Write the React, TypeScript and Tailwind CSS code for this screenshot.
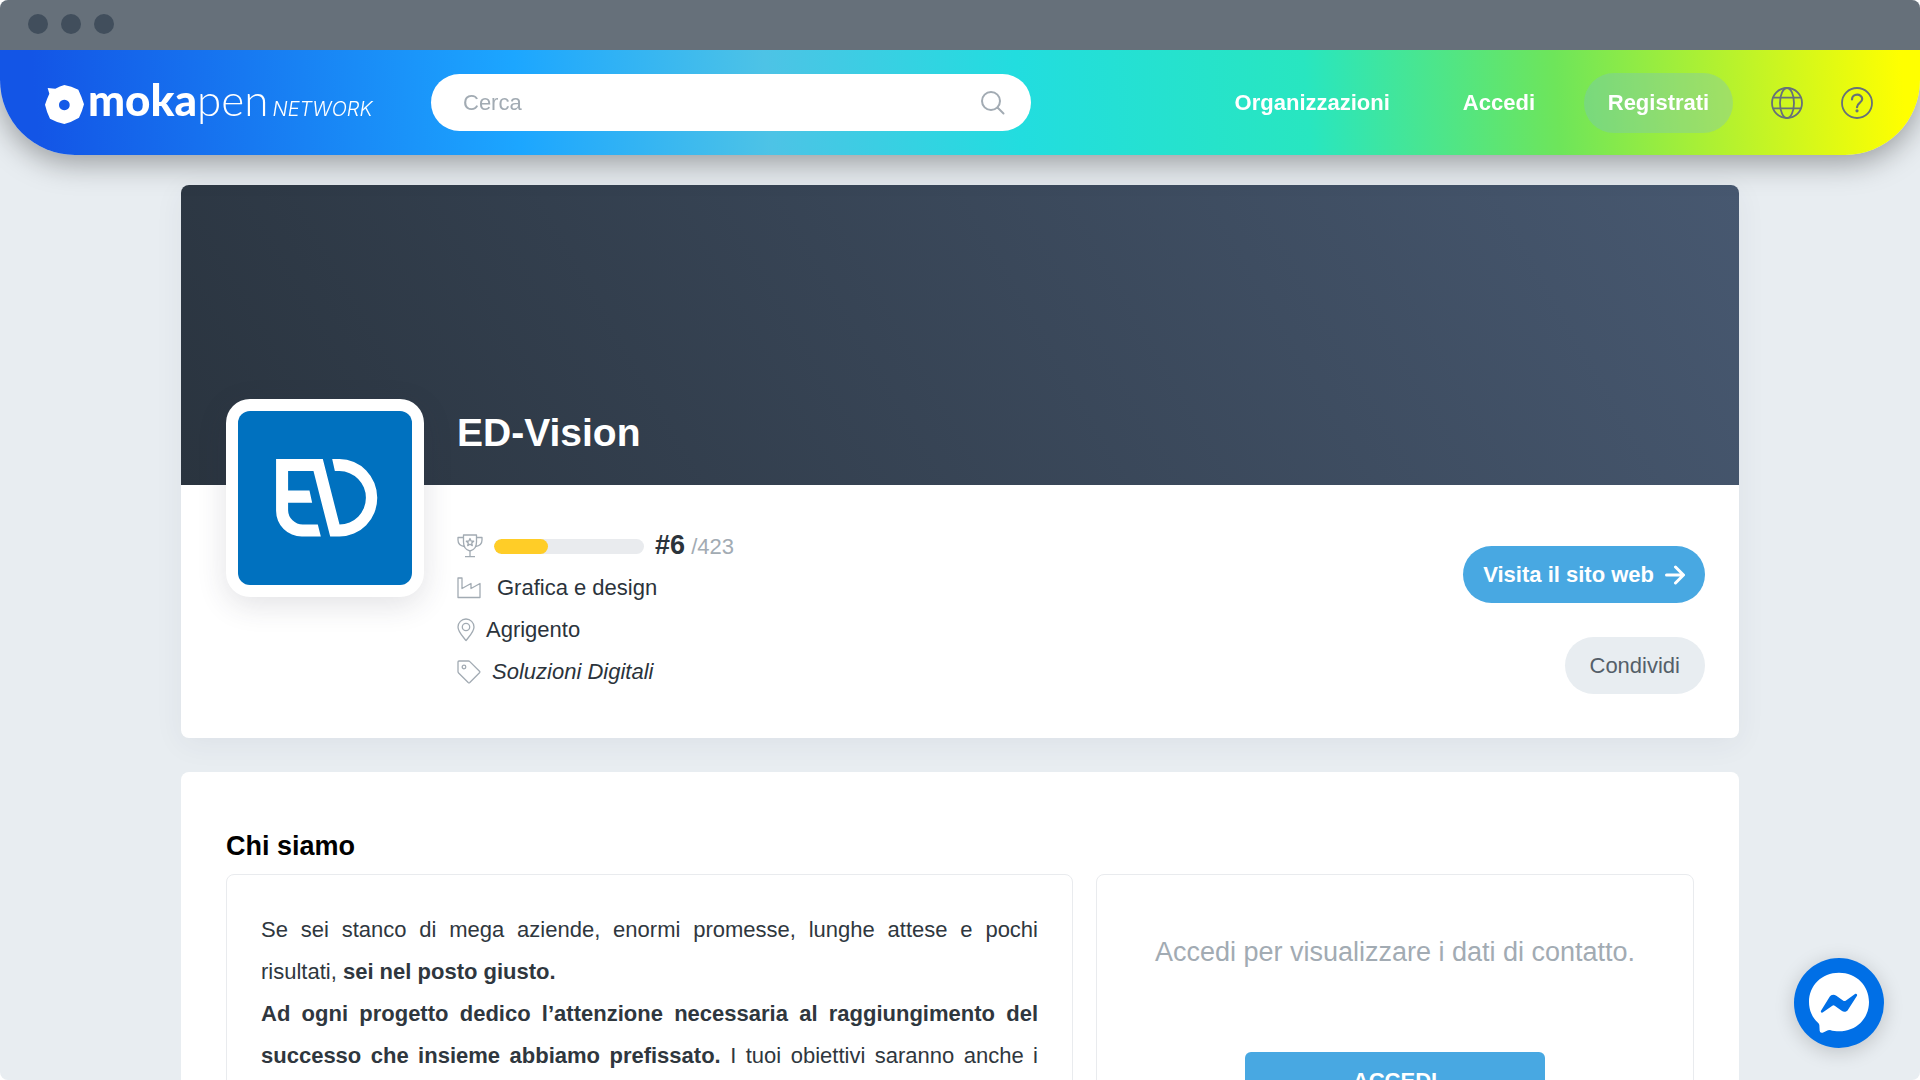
import type { ReactNode } from 'react';

interface IconProps {
  className?: string;
}

const ranking = { position: 6, total: 423, percent: 36 };

const LogoMark = () => (
  <svg viewBox="135 255 117 117" className="w-[39px] h-[39px] shrink-0" fill="#fff" aria-hidden="true">
    <path
      fillRule="evenodd"
      d="M143 264L166 266Q180 258 193 255Q214 259 235 269Q245 290 252 313Q247 333 237 353Q215 366 193 372Q170 367 150 356Q140 336 135 314Q140 298 148 281ZM193 299a16 16 0 1 0 0.1 0Z"
    />
  </svg>
);

const SearchIcon = ({ className }: IconProps) => (
  <svg viewBox="0 0 24 24" className={className} fill="none" stroke="currentColor" strokeWidth="2" strokeLinecap="round">
    <circle cx="10" cy="10" r="9" />
    <path d="M16.500 16.500L22.500 22.500" />
  </svg>
);

const GlobeIcon = ({ className }: IconProps) => (
  <svg viewBox="0 0 32 32" className={className} fill="none" stroke="currentColor" strokeWidth="1.800">
    <circle cx="16" cy="16" r="15" />
    <ellipse cx="16" cy="16" rx="7" ry="15" />
    <path d="M2.200 10.700H29.800M2.200 21.300H29.800" />
  </svg>
);

const HelpIcon = ({ className }: IconProps) => (
  <svg viewBox="0 0 32 32" className={className} fill="none" stroke="currentColor" strokeWidth="1.800">
    <circle cx="16" cy="16" r="15" />
    <path d="M11 12.500C11 6 21.200 6.300 21.200 12C21.200 16 16 15.800 16 20.200" strokeWidth="2.200" strokeLinecap="round" />
    <circle cx="16" cy="23.800" r="1.600" fill="currentColor" stroke="none" />
  </svg>
);

const TrophyIcon = () => (
  <svg viewBox="0 0 26 24" className="w-[26px] h-6" fill="none" stroke="currentColor" strokeWidth="1.300" strokeLinejoin="round">
    <path d="M6.500 1H19.500V8C19.500 13 17 16 13 17C9 16 6.500 13 6.500 8ZM13 17V22.500M8 22.700H18" />
    <path d="M6.500 3.500H1V6C1 9.500 3.500 12 7.500 12.500M19.500 3.500H25V6C25 9.500 22.500 12 18.500 12.500" />
    <path d="M13 4.500L14.100 7L16.700 7.200L14.700 9L15.300 11.600L13 10.200L10.700 11.600L11.300 9L9.300 7.200L11.900 7Z" />
  </svg>
);

const IndustryIcon = () => (
  <svg viewBox="0 0 24 22" className="w-6 h-[22px]" fill="none" stroke="currentColor" strokeWidth="1.300" strokeLinejoin="round">
    <path d="M1 1H5V11.500L14 6.500V11.500L23 6.500V20.500H1Z" />
  </svg>
);

const PinIcon = () => (
  <svg viewBox="0 0 18 24" className="w-[18px] h-6" fill="none" stroke="currentColor" strokeWidth="1.300" strokeLinejoin="round">
    <path d="M9 22.500C6 18.500 1 14 1 9A8 8 0 0 1 17 9C17 14 12 18.500 9 22.500Z" />
    <circle cx="9" cy="9" r="3.700" />
  </svg>
);

const TagIcon = () => (
  <svg viewBox="0 0 24 24" className="w-6 h-6" fill="none" stroke="currentColor" strokeWidth="1.300" strokeLinejoin="round">
    <path d="M1 2Q1 1 2 1H11.500Q12.200 1 12.800 1.600L22.500 11.200Q23.200 12 22.500 12.800L12.800 22.500Q12 23.200 11.200 22.500L1.600 13Q1 12.400 1 11.500Z" />
    <circle cx="7" cy="7" r="1.800" />
  </svg>
);

const ArrowIcon = () => (
  <svg viewBox="0 0 20 20" className="w-5 h-5" fill="none" stroke="currentColor" strokeWidth="3" strokeLinecap="round" strokeLinejoin="round">
    <path d="M1.500 10H18M10.500 2L18.500 10L10.500 18" />
  </svg>
);

const InfoRow = ({ icon, children }: { icon: ReactNode; children: ReactNode }) => (
  <li className="flex items-center h-[42px] text-[#a2abb3]">
    {icon}
    {children}
  </li>
);

const Header = () => (
  <header className="sticky top-0 z-20 flex items-center h-[105px] pl-[45px] pr-[47px] rounded-b-[75px] shadow-[0_8px_30px_rgba(0,0,0,0.35)] bg-[linear-gradient(86deg,#1355e6_2%,#1ca6ff_27%,#4dc3e6_40%,#22dddf_53%,#28e6c0_68%,#6ee55a_81%,#ffff00_99%)]">
    <a href="#" className="flex items-center w-[386px] pt-[3px] text-white shrink-0" aria-label="mokapen network">
      <LogoMark />
      <span className="flex items-baseline ml-1 font-['Lato',sans-serif] text-[44px] leading-[52px] whitespace-nowrap">
        <span className="font-black">moka</span>
        <span className="font-light">pen</span>
        <span className="ml-1 font-['Inter',sans-serif] text-[20px] italic font-light">NETWORK</span>
      </span>
    </a>
    <form className="flex items-center w-[600px] h-[57px] pl-8 pr-[26px] rounded-full bg-white text-[#a2abb3]">
      <label htmlFor="search" className="sr-only">Cerca</label>
      <input
        id="search"
        type="text"
        placeholder="Cerca"
        className="flex-1 min-w-0 h-[42px] outline-none placeholder:text-[#a2abb3]"
      />
      <button type="submit" aria-label="Cerca">
        <SearchIcon className="w-6 h-6" />
      </button>
    </form>
    <nav className="flex items-center ml-auto font-bold text-white">
      <a href="#">Organizzazioni</a>
      <a href="#" className="ml-[73px]">Accedi</a>
      <a href="#" className="flex items-center justify-center w-[149px] h-[60px] ml-[49px] rounded-full bg-[#78c0cc]/35">
        Registrati
      </a>
      <button type="button" className="ml-[38px] text-[#66707a]" aria-label="Lingua">
        <GlobeIcon className="w-8 h-8" />
      </button>
      <button type="button" className="ml-[38px] text-[#66707a]" aria-label="Aiuto">
        <HelpIcon className="w-8 h-8" />
      </button>
    </nav>
  </header>
);

const ProfileCard = () => (
  <section className="rounded-lg bg-white shadow-[0_6px_30px_rgba(50,50,90,0.06)]">
    <div className="flex items-end h-[300px] pl-[276px] pb-[29px] rounded-t-lg bg-[linear-gradient(60deg,#2a343f,#475870)]">
      <h1 className="text-[39px] leading-[46px] font-bold text-white">ED-Vision</h1>
    </div>
    <div className="flex items-start pl-[45px] pr-[34px] pb-11">
      <div className="w-[198px] h-[198px] -mt-[86px] p-3 rounded-3xl bg-white shadow-[0_8px_30px_rgba(50,50,70,0.14)]">
        <svg viewBox="204 93 521 521" className="w-full h-full rounded-xl bg-[#0071bf]" fill="#fff" role="img" aria-label="ED-Vision">
          <path d="M486 237H508A113 116 0 0 1 508 469H480L430 273H354V331H418L426 368H354V390A44 44 0 0 0 398 433H443L452 469H395A77 77 0 0 1 318 392V237H458L508 433A79 80 0 0 0 508 273H494Z" />
        </svg>
      </div>
      <ul className="flex-1 ml-[33px] pt-10">
        <InfoRow icon={<TrophyIcon />}>
          <div className="w-[150px] h-[15px] ml-[11px] rounded-full bg-[#e9ebee] overflow-hidden">
            <div className="h-full rounded-full bg-[#ffcd27]" style={{ width: `${ranking.percent}%` }} />
          </div>
          <p className="ml-[11px]">
            <strong className="text-[27px] text-[#2b333b]">#{ranking.position}</strong> /{ranking.total}
          </p>
        </InfoRow>
        <InfoRow icon={<IndustryIcon />}>
          <span className="ml-4 text-[#2b333b]">Grafica e design</span>
        </InfoRow>
        <InfoRow icon={<PinIcon />}>
          <span className="ml-[11px] text-[#2b333b]">Agrigento</span>
        </InfoRow>
        <InfoRow icon={<TagIcon />}>
          <em className="ml-[11px] text-[#2b333b]">Soluzioni Digitali</em>
        </InfoRow>
      </ul>
      <div className="flex flex-col items-end gap-[34px] pt-[61px]">
        <a href="#" className="flex items-center gap-[11px] h-[57px] px-5 rounded-full bg-[#48a8e2] font-bold text-white">
          Visita il sito web
          <ArrowIcon />
        </a>
        <button type="button" className="h-[57px] px-[25px] rounded-full bg-[#e8edf1] text-[#555f69]">
          Condividi
        </button>
      </div>
    </div>
  </section>
);

const AboutCard = () => (
  <section className="px-[45px] pt-[53px] pb-12 rounded-lg bg-white">
    <h2 className="mb-[7px] text-[27px] leading-[42px] font-bold text-black">Chi siamo</h2>
    <div className="grid grid-cols-[847fr_598fr] gap-[23px]">
      <div className="px-[34px] py-[34px] rounded-lg border border-[#e9ebee] text-justify leading-[42px] text-[#2f373e]">
        <p>
          Se sei stanco di mega aziende, enormi promesse, lunghe attese e pochi risultati,{' '}
          <strong>sei nel posto giusto.</strong>
        </p>
        <p className="[text-align-last:justify]">
          <strong>Ad ogni progetto dedico l’attenzione necessaria al raggiungimento del successo che insieme abbiamo prefissato.</strong>{' '}
          I tuoi obiettivi saranno anche i
        </p>
      </div>
      <div className="flex flex-col items-center px-8 pt-14 pb-12 rounded-lg border border-[#e9ebee]">
        <p className="text-[27px] leading-[42px] text-[#a2abb3]">Accedi per visualizzare i dati di contatto.</p>
        <button type="button" className="w-[300px] h-[57px] mt-[79px] rounded-md bg-[#48a8e2] font-bold text-white">
          ACCEDI
        </button>
      </div>
    </div>
  </section>
);

const MessengerButton = () => (
  <button
    type="button"
    aria-label="Messenger"
    className="fixed right-9 bottom-8 z-30 w-[90px] h-[90px] rounded-full bg-[#006fe6] shadow-[0_4px_20px_rgba(0,0,0,0.18)]"
  >
    <svg viewBox="102 112 270 270" className="w-full h-full">
      <path
        fill="#fff"
        d="M237 156C289 156 327 194 327 244C327 294 289 332 237 332C228 332 219 331 210 328Q207 328 204 329L188 336Q180 338 179 330L178 313Q177 309 174 306C157 291 147 269 147 244C147 194 185 156 237 156Z"
      />
      <path
        fill="#006fe6"
        d="M183 270L209 228C213 221 222 220 229 225L250 240Q253 242 257 240L285 220C289 217 293 221 291 225L264 267C260 274 251 275 245 270L224 255Q220 253 217 255L189 275C185 278 181 274 183 270Z"
      />
    </svg>
  </button>
);

export default function App() {
  return (
    <div className="h-screen bg-white">
      <div className="flex flex-col h-full rounded-lg overflow-hidden bg-[#e8edf1] font-['Liberation_Sans',Arial,sans-serif] text-[22px] leading-[26px]">
        <div className="flex items-center gap-[13px] h-[50px] pl-7 pb-[2px] shrink-0 bg-[#66707a]">
          <span className="w-5 h-5 rounded-full bg-[#414e5c]" />
          <span className="w-5 h-5 rounded-full bg-[#414e5c]" />
          <span className="w-5 h-5 rounded-full bg-[#414e5c]" />
        </div>
        <div className="flex-1 min-h-0 overflow-y-auto [scrollbar-width:none]">
          <Header />
          <main className="flex flex-col gap-[34px] px-[181px] pt-[30px] pb-12">
            <ProfileCard />
            <AboutCard />
          </main>
        </div>
        <MessengerButton />
      </div>
    </div>
  );
}
